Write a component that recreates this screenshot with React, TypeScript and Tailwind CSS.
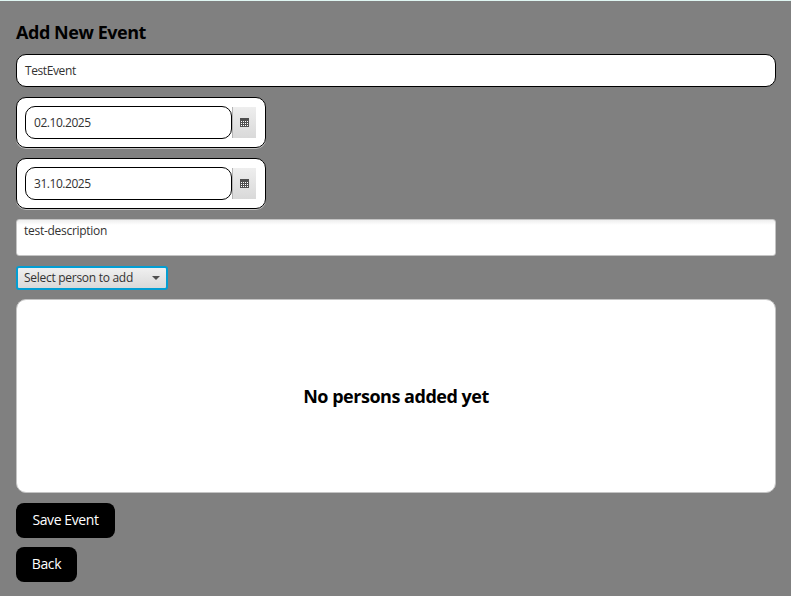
function CalendarIcon() {
  return (
    <svg width="9" height="9" viewBox="0 0 9 9" shapeRendering="crispEdges" className="block">
      <rect width="9" height="9" fill="#4f4f4f" />
      {[3, 5, 7].map((y) =>
        [1, 3, 5, 7].map((x) => <rect key={`${x}-${y}`} x={x} y={y} width="1" height="1" fill="#ffffff" />)
      )}
    </svg>
  );
}

function DateField({ value }: { value: string }) {
  return (
    <div className="flex h-[51px] w-[250px] items-start rounded-[10px] border border-black bg-white pl-2 pt-2 shadow-[0_1px_0_#c4c4c4]">
      <div className="flex h-[33px] w-[207px] items-center rounded-[10px] border border-black bg-white pl-2 text-[12px] leading-4 tracking-[-0.45px]">
        {value}
      </div>
      <div className="mt-px flex h-[31px] w-6 items-start justify-center border-l border-[#b5b5b5] bg-linear-to-b from-[#eeeeee] to-[#d9d9d9] pt-[11px]">
        <CalendarIcon />
      </div>
    </div>
  );
}

export default function App() {
  return (
    <div className="flex h-[596px] w-[791px] flex-col items-start overflow-hidden border-t border-[#dff6f2] bg-[#808080] px-4 font-['Open_Sans','Noto_Sans',sans-serif] text-[#323232]">
      <h1 className="mt-[19px] h-[34px] whitespace-nowrap text-[18px] font-bold leading-6 tracking-[-0.45px] text-black">
        Add New Event
      </h1>
      <div className="flex h-[33px] w-[760px] items-center rounded-[10px] border border-black bg-white pl-2 text-[12px] leading-4 tracking-[-0.4px]">
        TestEvent
      </div>
      <div className="mt-[10px]">
        <DateField value="02.10.2025" />
      </div>
      <div className="mt-[10px]">
        <DateField value="31.10.2025" />
      </div>
      <div className="mt-[10px] h-[37px] w-[760px] rounded-[3px] border border-[#c4c4c4] bg-linear-to-b from-[#eeeeee] to-white to-[5px] pl-[7px] pt-[3px] text-[12px] leading-4 tracking-[-0.28px]">
        test-description
      </div>
      <div className="mt-[10px] flex h-6 w-[152px] items-center justify-between rounded-[3px] border-2 border-[#039ed3] bg-linear-to-b from-[#f0f0f0] to-[#d9d9d9] pl-[6px] pr-[6px] text-[12px] leading-4 tracking-[-0.28px] whitespace-nowrap">
        <span>Select person to add</span>
        <svg width="8" height="4" viewBox="0 0 8 4" className="block">
          <path d="M0 0h8L4 4z" fill="#4f4f4f" />
        </svg>
      </div>
      <div className="mt-[9px] flex h-[194px] w-[760px] items-center justify-center rounded-[10px] border border-[#c4c4c4] bg-white text-[18px] font-bold leading-6 tracking-[-0.48px] text-black">
        <span>No persons added yet</span>
      </div>
      <button className="mt-[10px] h-[35px] w-[99px] rounded-lg bg-black pb-[2px] text-[14px] leading-5 tracking-[-0.4px] whitespace-nowrap text-white">
        Save Event
      </button>
      <button className="mt-[9px] h-[35px] w-[61px] rounded-lg bg-black pb-[2px] text-[14px] leading-5 tracking-[-0.4px] text-white">
        Back
      </button>
    </div>
  );
}
